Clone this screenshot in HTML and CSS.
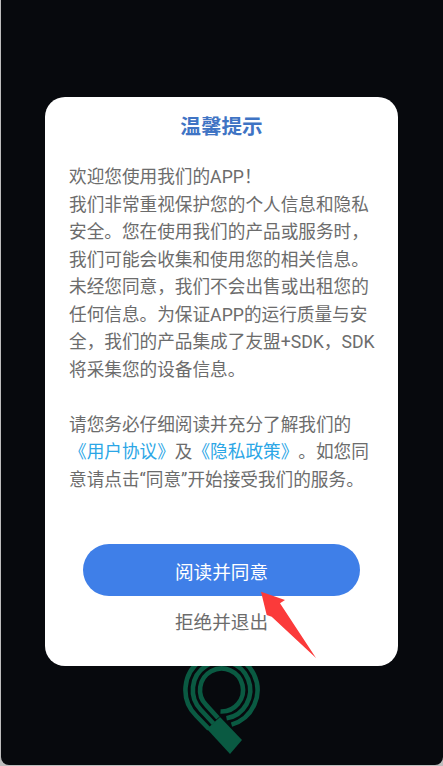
FILE: index.html
```html
<!DOCTYPE html>
<html lang="zh-CN">
<head>
<meta charset="utf-8">
<title>温馨提示</title>
<link rel="stylesheet" href="styles.css">
</head>
<body>
<div class="screen">
  <svg class="logo" viewBox="0 0 443 766" width="443" height="766" aria-hidden="true">
    <g fill="none" stroke="#0a5a42" stroke-width="4.6">
      <path d="M209 729 L196 715.5 A36 36 0 1 1 231.5 724.6"/>
      <path d="M213.5 723.5 L201.2 710.3 A28.7 28.7 0 1 1 226.5 718.3"/>
      <path d="M218 718 L206.3 705.2 A21.5 21.5 0 1 1 220.5 711.5"/>
    </g>
    <polygon points="220,717 242,740 230,754 207,729" fill="#0a5a42"/>
  </svg>
  <main class="card">
    <h1 class="title">温馨提示</h1>
    <p class="body">欢迎您使用我们的APP！<br>我们非常重视保护您的个人信息和隐私安全。您在使用我们的产品或服务时，我们可能会收集和使用您的相关信息。未经您同意，我们不会出售或出租您的任何信息。为保证APP的运行质量与安全，我们的产品集成了友盟+SDK，SDK将采集您的设备信息。</p>
    <p class="body second">请您务必仔细阅读并充分了解我们的<br><a class="link">《用户协议》</a>及<a class="link">《隐私政策》</a>。如您同意请点击“同意”开始接受我们的服务。</p>
    <button class="agree">阅读并同意</button>
    <button class="refuse">拒绝并退出</button>
  </main>
  <svg class="arrow" viewBox="0 0 60 70" width="60" height="70" aria-hidden="true">
    <polygon points="1,1.7 25,10 20,13.3 56,68 11.7,26.7 6.7,25" fill="#fb3a3a"/>
  </svg>
</div>
</body>
</html>
```
FILE: styles.css
```css
html, body {
  margin: 0;
  padding: 0;
  width: 443px;
  height: 766px;
  overflow: hidden;
  background: #bdbdbd;
}
body {
  font-family: Roboto, "Noto Sans CJK SC", sans-serif;
  text-spacing-trim: space-all;
}
.screen {
  position: relative;
  box-sizing: border-box;
  width: 442px;
  height: 765px;
  margin-left: 1px;
  padding: 97px 44px 0;
  background: #07090d;
  border-radius: 0 0 8px 8px;
  overflow: hidden;
}
.logo {
  position: absolute;
  left: -1px;
  top: 0;
}
.card {
  position: relative;
  box-sizing: border-box;
  width: 353px;
  height: 569px;
  padding: 16px 19px 0;
  background: #fff;
  border-radius: 20px;
  display: flex;
  flex-direction: column;
  align-items: center;
}
.title {
  margin: 0 0 23px;
  font-size: 20.6px;
  line-height: 28px;
  font-weight: 700;
  color: #3f74c4;
}
.body {
  box-sizing: border-box;
  margin: 0;
  width: 315px;
  padding-left: 5px;
  font-size: 17.65px;
  line-height: 27.5px;
  color: #6c6c6c;
}
.second {
  margin-top: 27.5px;
}
.link {
  color: #2ba6e6;
}
.agree {
  flex: none;
  width: 277px;
  height: 52px;
  margin-top: 50px;
  border: 0;
  border-radius: 26px;
  background: #3f7fe8;
  color: #fff;
  font: inherit;
  font-size: 18.6px;
}
.refuse {
  margin-top: 13px;
  padding: 0;
  border: 0;
  background: none;
  color: #6c6c6c;
  font: inherit;
  font-size: 18.6px;
  line-height: 28px;
}
.arrow {
  position: absolute;
  left: 259px;
  top: 590px;
}
```
